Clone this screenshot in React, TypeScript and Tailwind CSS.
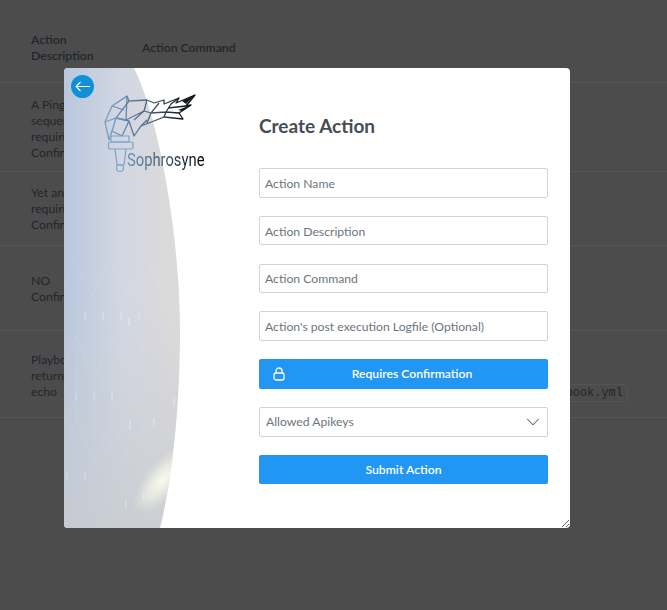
import { ChevronDown } from "lucide-react";

const rows = [
  { className: "h-[89px] pt-[14px]", text: "A Ping\nsequence\nrequiring\nConfirmation" },
  { className: "h-[74px] pt-[13px]", text: "Yet another\nrequiring\nConfirmation" },
  { className: "h-[85px] pt-[27px]", text: "NO\nConfirmation" },
  { className: "h-[87px] pt-[21px]", text: "Playbook\nreturn\necho", code: "playbook.yml" },
];

const fields = [
  "Action Name",
  "Action Description",
  "Action Command",
  "Action's post execution Logfile (Optional)",
];

function SidePanel() {
  return (
    <svg viewBox="0 0 195 460" className="block h-full w-full">
      <defs>
        <linearGradient id="base" x1="0" y1="0" x2="116" y2="0" gradientUnits="userSpaceOnUse">
          <stop offset="0" stopColor="#b9c7dd" />
          <stop offset="0.5" stopColor="#d2d7e2" />
          <stop offset="1" stopColor="#dedad9" />
        </linearGradient>
        <linearGradient id="fade" x1="0" y1="0" x2="0" y2="1">
          <stop offset="0.5" stopColor="#c9ced2" stopOpacity="0" />
          <stop offset="1" stopColor="#c8ccd0" stopOpacity="0.8" />
        </linearGradient>
        <radialGradient
          id="glow"
          cx="0"
          cy="0"
          r="1"
          gradientUnits="userSpaceOnUse"
          gradientTransform="translate(99 412) rotate(-50) scale(42 18)"
        >
          <stop offset="0" stopColor="#fbfbee" />
          <stop offset="0.5" stopColor="#f1f1e4" stopOpacity="0.7" />
          <stop offset="1" stopColor="#e6e6dc" stopOpacity="0" />
        </radialGradient>
        <clipPath id="bulge">
          <path d="M0 0H70C95 50 116 170 116 262C116 340 108 410 96 460H0Z" />
        </clipPath>
      </defs>
      <g clipPath="url(#bulge)">
        <rect width="195" height="460" fill="url(#base)" />
        <rect width="195" height="460" fill="url(#fade)" />
        <rect width="195" height="460" fill="url(#glow)" />
        <g fill="none" stroke="#ffffff" strokeOpacity="0.09">
          <path d="M0 220L10 190L28 228L46 190L64 228L82 190L100 228" />
          <path d="M0 300L12 268L30 310L48 268L66 310L84 268L102 300" />
          <path d="M0 385L12 350L30 395L48 350L66 395L84 350" />
          <path d="M12 268V350M30 310V395M48 268V350M30 228V310M66 228V310" />
        </g>
        <g stroke="#ffffff" strokeOpacity="0.28" strokeWidth="1.5">
          <path d="M21 245V252M39 245V252M57 245V252M75 245V252" />
          <path d="M12 325V332M30 325V332M48 325V332" />
          <path d="M3 405V412M21 405V412M62 432V440M79 425V432M110 330V338" />
        </g>
        <path d="M65 250V258M90 350V358M66 352V362" stroke="#dbe8f8" strokeOpacity="0.6" strokeWidth="2" />
      </g>
      <Torch />
    </svg>
  );
}

function Torch() {
  return (
    <g fill="none" strokeLinejoin="round">
      <defs>
        <linearGradient id="torch" x1="41" y1="0" x2="125" y2="0" gradientUnits="userSpaceOnUse">
          <stop offset="0" stopColor="#7ba3c8" />
          <stop offset="0.5" stopColor="#4d6680" />
          <stop offset="1" stopColor="#08080c" />
        </linearGradient>
      </defs>
      <g stroke="url(#torch)" strokeWidth="1.3">
        <path d="M45 72L41 54L48 38L63 28L65 33L83 32L90 35L100 32L100 36L115 30L112 35L131 27L122 38L127 37L115 45L119 51L100 49L90 53L77 58L70 68L65 53L52 50L48 63L45 72" />
        <path d="M65 33L52 50L41 54M52 50L62 52L80 43L83 32M48 63L58 68L65 53M80 43L87 45L95 35M87 45L102 44L107 36M87 45L83 55M102 44L100 49M102 44L115 45M107 36L115 30M104 40L122 38" />
        <path d="M48 38L60 42M63 28L62 52M70 52L80 43M77 58L83 52" />
      </g>
      <path d="M118 33L131 27L122 36ZM114 42L127 37L118 43Z" fill="#14181e" />
      <g stroke="#7ba3c8" strokeWidth="1.2">
        <rect x="47" y="68" width="18" height="6" />
        <rect x="44.5" y="74" width="24.5" height="7" rx="1.5" />
        <path d="M51 81L53 97H60L62 81" />
        <circle cx="56" cy="100" r="3.5" />
      </g>
    </g>
  );
}

export default function App() {
  return (
    <div className="relative h-[610px] w-[667px] overflow-hidden bg-[#4c4c4c] font-['Lato',sans-serif] text-[12.2px] leading-4 text-[#20262c]">
      <div className="grid h-[83px] grid-cols-[111px_1fr] border-b border-[#565656] pl-[31px] pt-[32px] font-semibold">
        <span className="w-[70px]">Action Description</span>
        <span className="mt-[8px] self-start">Action Command</span>
      </div>
      {rows.map((row) => (
        <div
          key={row.text}
          className={`flex justify-between border-b border-[#565656] pl-[31px] pr-[39px] ${row.className}`}
        >
          <span className="whitespace-pre-line">{row.text}</span>
          {row.code && (
            <code className="mt-[32px] h-[18px] rounded-[3px] border border-[#555555] px-[4px] font-['Liberation_Mono',monospace] text-[12px]">
              {row.code}
            </code>
          )}
        </div>
      ))}

      <div className="absolute left-[64px] top-[68px] flex h-[460px] w-[506px] resize overflow-hidden rounded-[4px] bg-white">
        <div className="relative w-[195px] shrink-0">
          <SidePanel />
          <button className="absolute left-[7px] top-[7px] flex h-[23px] w-[23px] items-center justify-center rounded-full bg-[#0f90d9] text-white">
            <svg width="23" height="23" viewBox="0 0 23 23" fill="none" stroke="currentColor" strokeWidth="1.1">
              <path d="M5 11.5H19M9.5 7L5 11.5L9.5 16" />
            </svg>
          </button>
          <span className="absolute left-[63px] top-[79px] origin-left scale-x-[0.82] bg-gradient-to-r from-[#6d93b8] via-[#3d5468] to-[#050505] bg-clip-text font-['Roboto',sans-serif] text-[18px] leading-[26px] text-transparent">
            Sophrosyne
          </span>
        </div>

        <form className="flex flex-1 flex-col pr-[22px] pt-[46px]">
          <h1 className="mb-[30px] text-[19px] font-bold leading-6 text-[#454d55]">Create Action</h1>
          <div className="flex flex-col gap-[18.2px]">
            {fields.map((field) => (
              <input
                key={field}
                placeholder={field}
                className="h-[29.6px] rounded-[2px] border border-[#cfd3da] bg-white px-[5px] pt-px text-[12.2px] placeholder:text-[#6c757d]"
              />
            ))}
            <button
              type="button"
              className="flex h-[29.6px] items-center rounded-[2px] bg-[#2196f3] pl-[14px] text-[12.2px] font-semibold text-white"
            >
              <svg width="12" height="14" viewBox="0 0 12 14" fill="none" stroke="currentColor" strokeWidth="1.3">
                <rect x="1" y="6" width="10" height="7" rx="2" />
                <path d="M3 6V4a3 3 0 0 1 6 0v2" />
              </svg>
              <span className="flex-1 pr-[9px] pt-px text-center">Requires Confirmation</span>
            </button>
            <div className="relative h-[29.6px]">
              <select className="h-full w-full appearance-none rounded-[2px] border border-[#cfd3da] bg-white px-[6px] pt-px text-[12.2px] text-[#6c757d]">
                <option>Allowed Apikeys</option>
              </select>
              <ChevronDown
                size={22}
                strokeWidth={1.1}
                className="pointer-events-none absolute right-[4px] top-[4px] text-[#555e68]"
              />
            </div>
            <button
              type="button"
              className="h-[29.6px] rounded-[2px] bg-[#2196f3] pt-[2px] text-[12.2px] font-semibold text-white"
            >
              Submit Action
            </button>
          </div>
        </form>
      </div>
    </div>
  );
}
